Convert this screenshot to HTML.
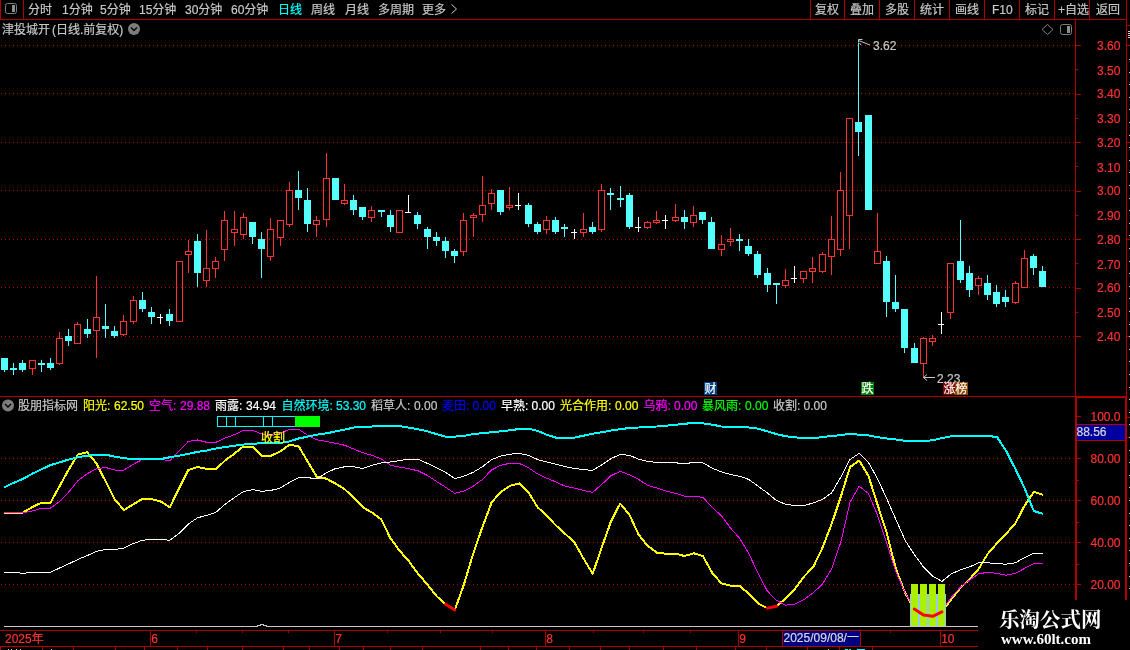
<!DOCTYPE html>
<html lang="zh-CN"><head><meta charset="utf-8"><title>津投城开 日线</title>
<style>html,body{margin:0;padding:0;background:#000;overflow:hidden}svg{display:block;will-change:transform}text{font-family:"Liberation Sans","Noto Sans CJK SC",sans-serif;white-space:pre}.serif{font-family:"Liberation Serif","Noto Serif CJK SC",serif;font-weight:bold}</style></head><body>
<svg width="1130" height="650" viewBox="0 0 1130 650">
<rect width="1130" height="650" fill="#000"/>
<g shape-rendering="crispEdges">
<line x1="1" y1="45.5" x2="1075" y2="45.5" stroke="#B00000" stroke-width="1" stroke-dasharray="1 3"/>
<line x1="1" y1="93.5" x2="1075" y2="93.5" stroke="#B00000" stroke-width="1" stroke-dasharray="1 3"/>
<line x1="1" y1="142.5" x2="1075" y2="142.5" stroke="#B00000" stroke-width="1" stroke-dasharray="1 3"/>
<line x1="1" y1="190.5" x2="1075" y2="190.5" stroke="#B00000" stroke-width="1" stroke-dasharray="1 3"/>
<line x1="1" y1="239.5" x2="1075" y2="239.5" stroke="#B00000" stroke-width="1" stroke-dasharray="1 3"/>
<line x1="1" y1="287.5" x2="1075" y2="287.5" stroke="#B00000" stroke-width="1" stroke-dasharray="1 3"/>
<line x1="1" y1="336.5" x2="1075" y2="336.5" stroke="#B00000" stroke-width="1" stroke-dasharray="1 3"/>
<line x1="1" y1="458.5" x2="1075" y2="458.5" stroke="#B00000" stroke-width="1" stroke-dasharray="1 3"/>
<line x1="1" y1="500.5" x2="1075" y2="500.5" stroke="#B00000" stroke-width="1" stroke-dasharray="1 3"/>
<line x1="1" y1="542.5" x2="1075" y2="542.5" stroke="#B00000" stroke-width="1" stroke-dasharray="1 3"/>
<line x1="1" y1="584.5" x2="1075" y2="584.5" stroke="#B00000" stroke-width="1" stroke-dasharray="1 3"/>
<rect x="0" y="0" width="1" height="20" fill="#B00000" />
<rect x="23" y="0" width="1" height="20" fill="#B00000" />
<rect x="0" y="19" width="1127" height="1" fill="#B00000" />
<rect x="810" y="0" width="1" height="19" fill="#B00000" />
<rect x="844" y="0" width="1" height="19" fill="#B00000" />
<rect x="879" y="0" width="1" height="19" fill="#B00000" />
<rect x="914" y="0" width="1" height="19" fill="#B00000" />
<rect x="949" y="0" width="1" height="19" fill="#B00000" />
<rect x="984" y="0" width="1" height="19" fill="#B00000" />
<rect x="1019" y="0" width="1" height="19" fill="#B00000" />
<rect x="1054" y="0" width="1" height="19" fill="#B00000" />
<rect x="1089" y="0" width="1" height="19" fill="#B00000" />
<rect x="1126" y="0" width="1" height="397" fill="#B00000" />
<rect x="1125" y="397" width="2" height="203" fill="#B00000" />
<rect x="1075" y="19" width="1" height="378" fill="#B00000" />
<rect x="1075" y="397" width="2" height="203" fill="#B00000" />
<rect x="0" y="396" width="1075" height="1" fill="#B00000" />
<rect x="1075" y="396" width="52" height="2" fill="#B00000" />
<rect x="0" y="630" width="978" height="1" fill="#B00000" />
<rect x="0" y="646" width="978" height="1" fill="#B00000" />
<rect x="1127" y="25" width="3" height="1" fill="#B00000" />
<rect x="1127" y="45" width="3" height="1" fill="#B00000" />
<rect x="1127" y="142" width="3" height="1" fill="#B00000" />
<rect x="1127" y="239" width="3" height="1" fill="#B00000" />
<rect x="1127" y="336" width="3" height="1" fill="#B00000" />
<rect x="1127" y="417" width="3" height="1" fill="#B00000" />
<rect x="1127" y="437" width="3" height="1" fill="#B00000" />
<rect x="1129" y="59" width="1" height="1" fill="#D0D0D0" />
<rect x="1129" y="72" width="1" height="1" fill="#D0D0D0" />
<rect x="1129" y="84" width="1" height="1" fill="#D0D0D0" />
<rect x="1129" y="97" width="1" height="1" fill="#D0D0D0" />
<rect x="1129" y="109" width="1" height="1" fill="#D0D0D0" />
<rect x="1129" y="122" width="1" height="1" fill="#D0D0D0" />
<rect x="1129" y="135" width="1" height="1" fill="#D0D0D0" />
<rect x="1129" y="147" width="1" height="1" fill="#D0D0D0" />
<rect x="1129" y="160" width="1" height="1" fill="#D0D0D0" />
<rect x="1129" y="172" width="1" height="1" fill="#D0D0D0" />
<rect x="1129" y="185" width="1" height="1" fill="#D0D0D0" />
<rect x="1129" y="198" width="1" height="1" fill="#D0D0D0" />
<rect x="1129" y="210" width="1" height="1" fill="#D0D0D0" />
<rect x="1129" y="223" width="1" height="1" fill="#D0D0D0" />
<rect x="1129" y="235" width="1" height="1" fill="#D0D0D0" />
<rect x="1129" y="248" width="1" height="1" fill="#D0D0D0" />
<rect x="1129" y="261" width="1" height="1" fill="#D0D0D0" />
<rect x="1129" y="273" width="1" height="1" fill="#D0D0D0" />
<rect x="1129" y="286" width="1" height="1" fill="#D0D0D0" />
<rect x="1129" y="298" width="1" height="1" fill="#D0D0D0" />
<rect x="1129" y="311" width="1" height="1" fill="#D0D0D0" />
<rect x="1129" y="324" width="1" height="1" fill="#D0D0D0" />
<rect x="1129" y="336" width="1" height="1" fill="#D0D0D0" />
<rect x="1129" y="349" width="1" height="1" fill="#D0D0D0" />
<rect x="1129" y="361" width="1" height="1" fill="#D0D0D0" />
<rect x="1129" y="374" width="1" height="1" fill="#D0D0D0" />
<rect x="1129" y="387" width="1" height="1" fill="#D0D0D0" />
<rect x="1129" y="399" width="1" height="1" fill="#D0D0D0" />
<rect x="1129" y="412" width="1" height="1" fill="#D0D0D0" />
<rect x="1129" y="424" width="1" height="1" fill="#D0D0D0" />
<rect x="1129" y="437" width="1" height="1" fill="#D0D0D0" />
<rect x="1129" y="450" width="1" height="1" fill="#D0D0D0" />
<rect x="1129" y="462" width="1" height="1" fill="#D0D0D0" />
<rect x="1129" y="475" width="1" height="1" fill="#D0D0D0" />
<rect x="1129" y="487" width="1" height="1" fill="#D0D0D0" />
<rect x="1129" y="500" width="1" height="1" fill="#D0D0D0" />
<rect x="1129" y="513" width="1" height="1" fill="#D0D0D0" />
<rect x="1129" y="525" width="1" height="1" fill="#D0D0D0" />
<rect x="1129" y="538" width="1" height="1" fill="#D0D0D0" />
<rect x="1129" y="550" width="1" height="1" fill="#D0D0D0" />
<rect x="1129" y="563" width="1" height="1" fill="#D0D0D0" />
<rect x="1129" y="576" width="1" height="1" fill="#D0D0D0" />
<rect x="1129" y="588" width="1" height="1" fill="#D0D0D0" />
<rect x="1128" y="31" width="2" height="1" fill="#D0D0D0" />
<rect x="1128" y="33" width="2" height="1" fill="#D0D0D0" />
<rect x="1128" y="35" width="2" height="1" fill="#D0D0D0" />
<rect x="1128" y="37" width="2" height="1" fill="#D0D0D0" />
<rect x="1076" y="45" width="5" height="1" fill="#B00000" />
<rect x="1076" y="69" width="2" height="1" fill="#B00000" />
<rect x="1076" y="94" width="5" height="1" fill="#B00000" />
<rect x="1076" y="118" width="2" height="1" fill="#B00000" />
<rect x="1076" y="142" width="5" height="1" fill="#B00000" />
<rect x="1076" y="166" width="2" height="1" fill="#B00000" />
<rect x="1076" y="191" width="5" height="1" fill="#B00000" />
<rect x="1076" y="215" width="2" height="1" fill="#B00000" />
<rect x="1076" y="239" width="5" height="1" fill="#B00000" />
<rect x="1076" y="263" width="2" height="1" fill="#B00000" />
<rect x="1076" y="288" width="5" height="1" fill="#B00000" />
<rect x="1076" y="312" width="2" height="1" fill="#B00000" />
<rect x="1076" y="336" width="5" height="1" fill="#B00000" />
<rect x="1077" y="416" width="4" height="1" fill="#B00000" />
<rect x="1077" y="438" width="2" height="1" fill="#B00000" />
<rect x="1077" y="458" width="4" height="1" fill="#B00000" />
<rect x="1077" y="480" width="2" height="1" fill="#B00000" />
<rect x="1077" y="500" width="4" height="1" fill="#B00000" />
<rect x="1077" y="522" width="2" height="1" fill="#B00000" />
<rect x="1077" y="542" width="4" height="1" fill="#B00000" />
<rect x="1077" y="564" width="2" height="1" fill="#B00000" />
<rect x="1077" y="584" width="4" height="1" fill="#B00000" />
<rect x="150" y="630" width="1" height="16" fill="#B00000" />
<rect x="334" y="630" width="1" height="16" fill="#B00000" />
<rect x="545" y="630" width="1" height="16" fill="#B00000" />
<rect x="738" y="630" width="1" height="16" fill="#B00000" />
<rect x="940" y="630" width="1" height="16" fill="#B00000" />
<rect x="196" y="630" width="1" height="3" fill="#B00000" />
<rect x="242" y="630" width="1" height="3" fill="#B00000" />
<rect x="288" y="630" width="1" height="3" fill="#B00000" />
<rect x="387" y="630" width="1" height="3" fill="#B00000" />
<rect x="440" y="630" width="1" height="3" fill="#B00000" />
<rect x="492" y="630" width="1" height="3" fill="#B00000" />
<rect x="593" y="630" width="1" height="3" fill="#B00000" />
<rect x="643" y="630" width="1" height="3" fill="#B00000" />
<rect x="690" y="630" width="1" height="3" fill="#B00000" />
<rect x="890" y="630" width="1" height="3" fill="#B00000" />
<rect x="0" y="646" width="1" height="4" fill="#B00000" />
<rect x="42" y="646" width="1" height="4" fill="#B00000" />
<rect x="73" y="646" width="1" height="4" fill="#B00000" />
<rect x="115" y="646" width="1" height="4" fill="#B00000" />
<rect x="144" y="646" width="1" height="4" fill="#B00000" />
<rect x="177" y="646" width="1" height="4" fill="#B00000" />
<rect x="207" y="646" width="1" height="4" fill="#B00000" />
<rect x="242" y="646" width="1" height="4" fill="#B00000" />
<rect x="283" y="646" width="1" height="4" fill="#B00000" />
<rect x="309" y="646" width="1" height="4" fill="#B00000" />
<rect x="339" y="646" width="1" height="4" fill="#B00000" />
<rect x="363" y="646" width="1" height="4" fill="#B00000" />
<rect x="390" y="646" width="1" height="4" fill="#B00000" />
<rect x="422" y="646" width="1" height="4" fill="#B00000" />
<rect x="480" y="646" width="1" height="4" fill="#B00000" />
<rect x="508" y="646" width="1" height="4" fill="#B00000" />
<rect x="536" y="646" width="1" height="4" fill="#B00000" />
<rect x="569" y="646" width="1" height="4" fill="#B00000" />
<rect x="600" y="646" width="1" height="4" fill="#B00000" />
<rect x="629" y="646" width="1" height="4" fill="#B00000" />
<rect x="663" y="646" width="1" height="4" fill="#B00000" />
<rect x="696" y="646" width="1" height="4" fill="#B00000" />
<rect x="735" y="646" width="1" height="4" fill="#B00000" />
<rect x="766" y="646" width="1" height="4" fill="#B00000" />
<rect x="807" y="646" width="1" height="4" fill="#B00000" />
<rect x="839" y="646" width="1" height="4" fill="#B00000" />
<rect x="872" y="646" width="1" height="4" fill="#B00000" />
<rect x="8" y="649" width="1" height="1" fill="#D0D0D0" />
<rect x="11" y="649" width="1" height="1" fill="#D0D0D0" />
<rect x="16" y="649" width="1" height="1" fill="#D0D0D0" />
<rect x="20" y="649" width="1" height="1" fill="#D0D0D0" />
<rect x="51" y="649" width="1" height="1" fill="#D0D0D0" />
<rect x="828" y="649" width="1" height="1" fill="#D0D0D0" />
<rect x="845" y="649" width="3" height="1" fill="#00FFFF" />
<rect x="849" y="649" width="2" height="1" fill="#00FFFF" />
<rect x="857" y="649" width="8" height="1" fill="#00FFFF" />
<rect x="4" y="358" width="1" height="14" fill="#54FFFF" />
<rect x="1" y="358" width="7" height="12" fill="#54FFFF" />
<rect x="13" y="363" width="1" height="12" fill="#54FFFF" />
<rect x="10" y="368" width="7" height="2" fill="#54FFFF" />
<rect x="22" y="360" width="1" height="12" fill="#54FFFF" />
<rect x="19" y="363" width="7" height="7" fill="#54FFFF" />
<rect x="32" y="369" width="1" height="6" fill="#FF3232" />
<rect x="29.5" y="360.5" width="6" height="8" fill="none" stroke="#FF3232" stroke-width="1"/>
<rect x="41" y="360" width="1" height="12" fill="#54FFFF" />
<rect x="38" y="363" width="7" height="2" fill="#54FFFF" />
<rect x="50" y="358" width="1" height="12" fill="#54FFFF" />
<rect x="47" y="363" width="7" height="5" fill="#54FFFF" />
<rect x="59" y="332" width="1" height="6" fill="#FF3232" />
<rect x="59" y="364" width="1" height="1" fill="#FF3232" />
<rect x="56.5" y="338.5" width="6" height="25" fill="none" stroke="#FF3232" stroke-width="1"/>
<rect x="68" y="329" width="1" height="17" fill="#54FFFF" />
<rect x="65" y="336" width="7" height="5" fill="#54FFFF" />
<rect x="77" y="322" width="1" height="2" fill="#FF3232" />
<rect x="74.5" y="324.5" width="6" height="19" fill="none" stroke="#FF3232" stroke-width="1"/>
<rect x="87" y="319" width="1" height="19" fill="#54FFFF" />
<rect x="84" y="329" width="7" height="5" fill="#54FFFF" />
<rect x="96" y="276" width="1" height="41" fill="#FF3232" />
<rect x="96" y="331" width="1" height="27" fill="#FF3232" />
<rect x="93.5" y="317.5" width="6" height="13" fill="none" stroke="#FF3232" stroke-width="1"/>
<rect x="105" y="304" width="1" height="34" fill="#54FFFF" />
<rect x="102" y="326" width="7" height="3" fill="#54FFFF" />
<rect x="114" y="326" width="1" height="12" fill="#54FFFF" />
<rect x="111" y="331" width="7" height="5" fill="#54FFFF" />
<rect x="123" y="315" width="1" height="6" fill="#FF3232" />
<rect x="123" y="335" width="1" height="1" fill="#FF3232" />
<rect x="120.5" y="321.5" width="6" height="13" fill="none" stroke="#FF3232" stroke-width="1"/>
<rect x="133" y="296" width="1" height="4" fill="#FF3232" />
<rect x="133" y="322" width="1" height="2" fill="#FF3232" />
<rect x="130.5" y="300.5" width="6" height="21" fill="none" stroke="#FF3232" stroke-width="1"/>
<rect x="142" y="292" width="1" height="20" fill="#54FFFF" />
<rect x="139" y="300" width="7" height="9" fill="#54FFFF" />
<rect x="151" y="307" width="1" height="17" fill="#54FFFF" />
<rect x="148" y="312" width="7" height="5" fill="#54FFFF" />
<rect x="160" y="314" width="1" height="10" fill="#FFFFFF" />
<rect x="157" y="317" width="6" height="1" fill="#FFFFFF" />
<rect x="169" y="309" width="1" height="17" fill="#54FFFF" />
<rect x="166" y="314" width="7" height="7" fill="#54FFFF" />
<rect x="176.5" y="261.5" width="6" height="60" fill="none" stroke="#FF3232" stroke-width="1"/>
<rect x="188" y="240" width="1" height="11" fill="#FF3232" />
<rect x="188" y="255" width="1" height="18" fill="#FF3232" />
<rect x="185.5" y="251.5" width="6" height="3" fill="none" stroke="#FF3232" stroke-width="1"/>
<rect x="197" y="234" width="1" height="53" fill="#54FFFF" />
<rect x="194" y="241" width="7" height="32" fill="#54FFFF" />
<rect x="206" y="230" width="1" height="38" fill="#FF3232" />
<rect x="206" y="281" width="1" height="6" fill="#FF3232" />
<rect x="203.5" y="268.5" width="6" height="12" fill="none" stroke="#FF3232" stroke-width="1"/>
<rect x="215" y="257" width="1" height="4" fill="#FF3232" />
<rect x="215" y="269" width="1" height="9" fill="#FF3232" />
<rect x="212.5" y="261.5" width="6" height="7" fill="none" stroke="#FF3232" stroke-width="1"/>
<rect x="224" y="211" width="1" height="9" fill="#FF3232" />
<rect x="224" y="250" width="1" height="11" fill="#FF3232" />
<rect x="221.5" y="220.5" width="6" height="29" fill="none" stroke="#FF3232" stroke-width="1"/>
<rect x="234" y="211" width="1" height="18" fill="#FF3232" />
<rect x="234" y="233" width="1" height="13" fill="#FF3232" />
<rect x="231.5" y="229.5" width="6" height="3" fill="none" stroke="#FF3232" stroke-width="1"/>
<rect x="243" y="213" width="1" height="4" fill="#FF3232" />
<rect x="243" y="235" width="1" height="4" fill="#FF3232" />
<rect x="240.5" y="217.5" width="6" height="17" fill="none" stroke="#FF3232" stroke-width="1"/>
<rect x="252" y="222" width="1" height="22" fill="#54FFFF" />
<rect x="249" y="222" width="7" height="15" fill="#54FFFF" />
<rect x="261" y="232" width="1" height="46" fill="#54FFFF" />
<rect x="258" y="239" width="7" height="10" fill="#54FFFF" />
<rect x="270" y="218" width="1" height="11" fill="#FF3232" />
<rect x="270" y="257" width="1" height="4" fill="#FF3232" />
<rect x="267.5" y="229.5" width="6" height="27" fill="none" stroke="#FF3232" stroke-width="1"/>
<rect x="280" y="238" width="1" height="8" fill="#FF3232" />
<rect x="277.5" y="220.5" width="6" height="17" fill="none" stroke="#FF3232" stroke-width="1"/>
<rect x="289" y="182" width="1" height="8" fill="#FF3232" />
<rect x="289" y="225" width="1" height="2" fill="#FF3232" />
<rect x="286.5" y="190.5" width="6" height="34" fill="none" stroke="#FF3232" stroke-width="1"/>
<rect x="298" y="171" width="1" height="39" fill="#54FFFF" />
<rect x="295" y="190" width="7" height="8" fill="#54FFFF" />
<rect x="307" y="188" width="1" height="44" fill="#54FFFF" />
<rect x="304" y="200" width="7" height="24" fill="#54FFFF" />
<rect x="316" y="216" width="1" height="4" fill="#FF3232" />
<rect x="316" y="225" width="1" height="12" fill="#FF3232" />
<rect x="313.5" y="220.5" width="6" height="4" fill="none" stroke="#FF3232" stroke-width="1"/>
<rect x="326" y="153" width="1" height="25" fill="#FF3232" />
<rect x="326" y="220" width="1" height="7" fill="#FF3232" />
<rect x="323.5" y="178.5" width="6" height="41" fill="none" stroke="#FF3232" stroke-width="1"/>
<rect x="335" y="178" width="1" height="22" fill="#54FFFF" />
<rect x="332" y="178" width="7" height="22" fill="#54FFFF" />
<rect x="344" y="184" width="1" height="16" fill="#FF3232" />
<rect x="344" y="204" width="1" height="1" fill="#FF3232" />
<rect x="341.5" y="200.5" width="6" height="3" fill="none" stroke="#FF3232" stroke-width="1"/>
<rect x="353" y="195" width="1" height="20" fill="#54FFFF" />
<rect x="350" y="200" width="7" height="10" fill="#54FFFF" />
<rect x="362" y="207" width="1" height="13" fill="#54FFFF" />
<rect x="359" y="207" width="7" height="10" fill="#54FFFF" />
<rect x="371" y="206" width="1" height="4" fill="#FF3232" />
<rect x="371" y="218" width="1" height="4" fill="#FF3232" />
<rect x="368.5" y="210.5" width="6" height="7" fill="none" stroke="#FF3232" stroke-width="1"/>
<rect x="381" y="210" width="1" height="7" fill="#54FFFF" />
<rect x="378" y="210" width="7" height="2" fill="#54FFFF" />
<rect x="390" y="210" width="1" height="22" fill="#54FFFF" />
<rect x="387" y="215" width="7" height="12" fill="#54FFFF" />
<rect x="396.5" y="210.5" width="6" height="22" fill="none" stroke="#FF3232" stroke-width="1"/>
<rect x="408" y="195" width="1" height="18" fill="#FFFFFF" />
<rect x="405" y="212" width="6" height="1" fill="#FFFFFF" />
<rect x="417" y="212" width="1" height="17" fill="#54FFFF" />
<rect x="414" y="215" width="7" height="9" fill="#54FFFF" />
<rect x="427" y="227" width="1" height="22" fill="#54FFFF" />
<rect x="424" y="229" width="7" height="8" fill="#54FFFF" />
<rect x="436" y="232" width="1" height="14" fill="#54FFFF" />
<rect x="433" y="237" width="7" height="4" fill="#54FFFF" />
<rect x="445" y="237" width="1" height="21" fill="#54FFFF" />
<rect x="442" y="241" width="7" height="10" fill="#54FFFF" />
<rect x="454" y="249" width="1" height="14" fill="#54FFFF" />
<rect x="451" y="251" width="7" height="5" fill="#54FFFF" />
<rect x="463" y="213" width="1" height="7" fill="#FF3232" />
<rect x="463" y="252" width="1" height="4" fill="#FF3232" />
<rect x="460.5" y="220.5" width="6" height="31" fill="none" stroke="#FF3232" stroke-width="1"/>
<rect x="473" y="213" width="1" height="2" fill="#FF3232" />
<rect x="473" y="218" width="1" height="19" fill="#FF3232" />
<rect x="470.5" y="215.5" width="6" height="2" fill="none" stroke="#FF3232" stroke-width="1"/>
<rect x="482" y="176" width="1" height="29" fill="#FF3232" />
<rect x="482" y="215" width="1" height="7" fill="#FF3232" />
<rect x="479.5" y="205.5" width="6" height="9" fill="none" stroke="#FF3232" stroke-width="1"/>
<rect x="491" y="189" width="1" height="4" fill="#FF3232" />
<rect x="491" y="204" width="1" height="6" fill="#FF3232" />
<rect x="488.5" y="193.5" width="6" height="10" fill="none" stroke="#FF3232" stroke-width="1"/>
<rect x="500" y="190" width="1" height="25" fill="#54FFFF" />
<rect x="497" y="190" width="7" height="22" fill="#54FFFF" />
<rect x="509" y="187" width="1" height="18" fill="#FF3232" />
<rect x="509" y="208" width="1" height="2" fill="#FF3232" />
<rect x="506.5" y="205.5" width="6" height="2" fill="none" stroke="#FF3232" stroke-width="1"/>
<rect x="518" y="193" width="1" height="17" fill="#FFFFFF" />
<rect x="515" y="205" width="6" height="1" fill="#FFFFFF" />
<rect x="528" y="203" width="1" height="24" fill="#54FFFF" />
<rect x="525" y="205" width="7" height="19" fill="#54FFFF" />
<rect x="537" y="222" width="1" height="12" fill="#54FFFF" />
<rect x="534" y="224" width="7" height="8" fill="#54FFFF" />
<rect x="546" y="216" width="1" height="4" fill="#FF3232" />
<rect x="546" y="230" width="1" height="4" fill="#FF3232" />
<rect x="543.5" y="220.5" width="6" height="9" fill="none" stroke="#FF3232" stroke-width="1"/>
<rect x="555" y="217" width="1" height="17" fill="#54FFFF" />
<rect x="552" y="220" width="7" height="12" fill="#54FFFF" />
<rect x="564" y="224" width="1" height="13" fill="#54FFFF" />
<rect x="561" y="227" width="7" height="2" fill="#54FFFF" />
<rect x="574" y="229" width="1" height="10" fill="#FFFFFF" />
<rect x="571" y="232" width="6" height="1" fill="#FFFFFF" />
<rect x="583" y="213" width="1" height="16" fill="#FF3232" />
<rect x="583" y="233" width="1" height="4" fill="#FF3232" />
<rect x="580.5" y="229.5" width="6" height="3" fill="none" stroke="#FF3232" stroke-width="1"/>
<rect x="592" y="222" width="1" height="12" fill="#54FFFF" />
<rect x="589" y="227" width="7" height="5" fill="#54FFFF" />
<rect x="601" y="184" width="1" height="6" fill="#FF3232" />
<rect x="601" y="230" width="1" height="2" fill="#FF3232" />
<rect x="598.5" y="190.5" width="6" height="39" fill="none" stroke="#FF3232" stroke-width="1"/>
<rect x="610" y="188" width="1" height="22" fill="#54FFFF" />
<rect x="607" y="193" width="7" height="2" fill="#54FFFF" />
<rect x="620" y="186" width="1" height="21" fill="#54FFFF" />
<rect x="617" y="198" width="7" height="2" fill="#54FFFF" />
<rect x="629" y="193" width="1" height="36" fill="#54FFFF" />
<rect x="626" y="195" width="7" height="32" fill="#54FFFF" />
<rect x="638" y="217" width="1" height="15" fill="#FFFFFF" />
<rect x="635" y="227" width="6" height="1" fill="#FFFFFF" />
<rect x="647" y="221" width="1" height="1" fill="#FF3232" />
<rect x="647" y="228" width="1" height="1" fill="#FF3232" />
<rect x="644.5" y="222.5" width="6" height="5" fill="none" stroke="#FF3232" stroke-width="1"/>
<rect x="656" y="211" width="1" height="9" fill="#FF3232" />
<rect x="656" y="223" width="1" height="1" fill="#FF3232" />
<rect x="653.5" y="220.5" width="6" height="2" fill="none" stroke="#FF3232" stroke-width="1"/>
<rect x="665" y="215" width="1" height="14" fill="#FFFFFF" />
<rect x="662" y="220" width="6" height="1" fill="#FFFFFF" />
<rect x="675" y="204" width="1" height="13" fill="#FF3232" />
<rect x="675" y="221" width="1" height="1" fill="#FF3232" />
<rect x="672.5" y="217.5" width="6" height="3" fill="none" stroke="#FF3232" stroke-width="1"/>
<rect x="684" y="210" width="1" height="19" fill="#54FFFF" />
<rect x="681" y="217" width="7" height="5" fill="#54FFFF" />
<rect x="693" y="206" width="1" height="9" fill="#FF3232" />
<rect x="693" y="223" width="1" height="4" fill="#FF3232" />
<rect x="690.5" y="215.5" width="6" height="7" fill="none" stroke="#FF3232" stroke-width="1"/>
<rect x="702" y="212" width="1" height="12" fill="#54FFFF" />
<rect x="699" y="212" width="7" height="8" fill="#54FFFF" />
<rect x="711" y="217" width="1" height="32" fill="#54FFFF" />
<rect x="708" y="222" width="7" height="27" fill="#54FFFF" />
<rect x="721" y="235" width="1" height="9" fill="#FF3232" />
<rect x="721" y="250" width="1" height="6" fill="#FF3232" />
<rect x="718.5" y="244.5" width="6" height="5" fill="none" stroke="#FF3232" stroke-width="1"/>
<rect x="730" y="228" width="1" height="11" fill="#FF3232" />
<rect x="730" y="242" width="1" height="4" fill="#FF3232" />
<rect x="727.5" y="239.5" width="6" height="2" fill="none" stroke="#FF3232" stroke-width="1"/>
<rect x="739" y="234" width="1" height="17" fill="#54FFFF" />
<rect x="736" y="239" width="7" height="2" fill="#54FFFF" />
<rect x="748" y="239" width="1" height="17" fill="#54FFFF" />
<rect x="745" y="246" width="7" height="8" fill="#54FFFF" />
<rect x="757" y="251" width="1" height="27" fill="#54FFFF" />
<rect x="754" y="254" width="7" height="21" fill="#54FFFF" />
<rect x="767" y="268" width="1" height="24" fill="#54FFFF" />
<rect x="764" y="273" width="7" height="12" fill="#54FFFF" />
<rect x="776" y="283" width="1" height="21" fill="#54FFFF" />
<rect x="773" y="283" width="7" height="2" fill="#54FFFF" />
<rect x="785" y="269" width="1" height="11" fill="#FF3232" />
<rect x="785" y="286" width="1" height="2" fill="#FF3232" />
<rect x="782.5" y="280.5" width="6" height="5" fill="none" stroke="#FF3232" stroke-width="1"/>
<rect x="794" y="266" width="1" height="17" fill="#FFFFFF" />
<rect x="791" y="278" width="6" height="1" fill="#FFFFFF" />
<rect x="803" y="279" width="1" height="4" fill="#FF3232" />
<rect x="800.5" y="271.5" width="6" height="7" fill="none" stroke="#FF3232" stroke-width="1"/>
<rect x="812" y="257" width="1" height="11" fill="#FF3232" />
<rect x="812" y="272" width="1" height="11" fill="#FF3232" />
<rect x="809.5" y="268.5" width="6" height="3" fill="none" stroke="#FF3232" stroke-width="1"/>
<rect x="822" y="252" width="1" height="2" fill="#FF3232" />
<rect x="822" y="272" width="1" height="1" fill="#FF3232" />
<rect x="819.5" y="254.5" width="6" height="17" fill="none" stroke="#FF3232" stroke-width="1"/>
<rect x="831" y="216" width="1" height="23" fill="#FF3232" />
<rect x="831" y="257" width="1" height="18" fill="#FF3232" />
<rect x="828.5" y="239.5" width="6" height="17" fill="none" stroke="#FF3232" stroke-width="1"/>
<rect x="840" y="172" width="1" height="18" fill="#FF3232" />
<rect x="840" y="250" width="1" height="6" fill="#FF3232" />
<rect x="837.5" y="190.5" width="6" height="59" fill="none" stroke="#FF3232" stroke-width="1"/>
<rect x="849" y="216" width="1" height="33" fill="#FF3232" />
<rect x="846.5" y="118.5" width="6" height="97" fill="none" stroke="#FF3232" stroke-width="1"/>
<rect x="858" y="43" width="1" height="113" fill="#54FFFF" />
<rect x="855" y="122" width="7" height="10" fill="#54FFFF" />
<rect x="868" y="115" width="1" height="95" fill="#54FFFF" />
<rect x="865" y="115" width="7" height="95" fill="#54FFFF" />
<rect x="877" y="213" width="1" height="38" fill="#FF3232" />
<rect x="874.5" y="251.5" width="6" height="12" fill="none" stroke="#FF3232" stroke-width="1"/>
<rect x="886" y="256" width="1" height="61" fill="#54FFFF" />
<rect x="883" y="261" width="7" height="41" fill="#54FFFF" />
<rect x="895" y="275" width="1" height="37" fill="#54FFFF" />
<rect x="892" y="302" width="7" height="7" fill="#54FFFF" />
<rect x="904" y="309" width="1" height="44" fill="#54FFFF" />
<rect x="901" y="309" width="7" height="39" fill="#54FFFF" />
<rect x="914" y="343" width="1" height="20" fill="#54FFFF" />
<rect x="911" y="348" width="7" height="15" fill="#54FFFF" />
<rect x="923" y="337" width="1" height="1" fill="#FF3232" />
<rect x="923" y="364" width="1" height="13" fill="#FF3232" />
<rect x="920.5" y="338.5" width="6" height="25" fill="none" stroke="#FF3232" stroke-width="1"/>
<rect x="932" y="335" width="1" height="3" fill="#FF3232" />
<rect x="932" y="342" width="1" height="4" fill="#FF3232" />
<rect x="929.5" y="338.5" width="6" height="3" fill="none" stroke="#FF3232" stroke-width="1"/>
<rect x="941" y="312" width="1" height="22" fill="#FFFFFF" />
<rect x="938" y="324" width="6" height="1" fill="#FFFFFF" />
<rect x="950" y="313" width="1" height="6" fill="#FF3232" />
<rect x="947.5" y="263.5" width="6" height="49" fill="none" stroke="#FF3232" stroke-width="1"/>
<rect x="960" y="220" width="1" height="63" fill="#54FFFF" />
<rect x="957" y="261" width="7" height="19" fill="#54FFFF" />
<rect x="969" y="266" width="1" height="31" fill="#54FFFF" />
<rect x="966" y="273" width="7" height="17" fill="#54FFFF" />
<rect x="978" y="276" width="1" height="2" fill="#FF3232" />
<rect x="978" y="286" width="1" height="9" fill="#FF3232" />
<rect x="975.5" y="278.5" width="6" height="7" fill="none" stroke="#FF3232" stroke-width="1"/>
<rect x="987" y="275" width="1" height="25" fill="#54FFFF" />
<rect x="984" y="283" width="7" height="12" fill="#54FFFF" />
<rect x="996" y="285" width="1" height="22" fill="#54FFFF" />
<rect x="993" y="292" width="7" height="12" fill="#54FFFF" />
<rect x="1005" y="290" width="1" height="17" fill="#54FFFF" />
<rect x="1002" y="297" width="7" height="5" fill="#54FFFF" />
<rect x="1015" y="281" width="1" height="2" fill="#FF3232" />
<rect x="1015" y="303" width="1" height="1" fill="#FF3232" />
<rect x="1012.5" y="283.5" width="6" height="19" fill="none" stroke="#FF3232" stroke-width="1"/>
<rect x="1024" y="250" width="1" height="8" fill="#FF3232" />
<rect x="1021.5" y="258.5" width="6" height="29" fill="none" stroke="#FF3232" stroke-width="1"/>
<rect x="1033" y="254" width="1" height="21" fill="#54FFFF" />
<rect x="1030" y="256" width="7" height="12" fill="#54FFFF" />
<rect x="1042" y="266" width="1" height="21" fill="#54FFFF" />
<rect x="1039" y="271" width="7" height="16" fill="#54FFFF" />
<rect x="217.5" y="416.5" width="78" height="10" fill="none" stroke="#00FFFF" stroke-width="1"/>
<rect x="226" y="416" width="1" height="11" fill="#00FFFF" />
<rect x="235" y="416" width="1" height="11" fill="#00FFFF" />
<rect x="263" y="416" width="1" height="11" fill="#00FFFF" />
<rect x="272" y="416" width="1" height="11" fill="#00FFFF" />
<rect x="295" y="416" width="25" height="11" fill="#00FF00" />
<rect x="910" y="594" width="36" height="32" fill="#96C8F0" />
<rect x="911" y="584" width="7" height="42" fill="#AAF000" />
<rect x="920" y="584" width="7" height="42" fill="#AAF000" />
<rect x="929" y="584" width="7" height="42" fill="#AAF000" />
<rect x="938" y="584" width="7" height="42" fill="#AAF000" />
</g>
<polyline points="4.0,512.5 4.5,512.5 13.7,512.5 22.9,512.5 32.1,507.2 41.3,502.8 50.4,502.8 59.6,486.2 68.8,469.4 78.0,454.4 87.2,452.3 96.4,463.3 105.6,481.4 114.8,499.6 124.0,510.1 133.2,504.3 142.3,499.0 151.5,499.0 160.7,501.5 169.9,507.2 179.1,488.1 188.3,470.0 197.5,467.1 206.7,468.8 215.9,469.2 225.1,460.5 234.2,453.8 243.4,446.5 252.6,446.5 261.8,455.7 271.0,455.7 280.2,451.5 289.4,444.8 298.6,446.2 307.8,461.8 317.0,477.1 326.1,478.6 335.3,483.4 344.5,489.1 353.7,497.7 362.9,507.3 372.1,512.6 381.3,519.5 390.5,538.4 399.7,550.8 408.9,561.3 418.0,573.7 427.2,584.2 436.4,596.0 445.6,604.2 454.8,610.0 464.0,584.2 473.2,553.7 482.4,527.0 491.6,502.4 500.8,491.9 509.9,485.8 519.1,483.4 528.3,491.9 537.5,507.2 546.7,515.5 555.9,525.5 565.1,533.7 574.3,542.2 583.5,558.5 592.7,573.7 601.9,547.0 611.0,521.3 620.2,503.5 629.4,514.7 638.6,534.6 647.8,546.0 657.0,552.7 666.2,553.7 675.4,553.7 684.6,556.0 693.8,553.3 702.9,556.0 712.1,572.8 721.3,583.3 730.5,585.7 739.7,586.1 748.9,593.8 758.1,603.5 767.3,608.1 776.5,606.2 785.6,598.5 794.8,589.0 804.0,576.6 813.2,567.0 822.4,548.0 831.6,524.0 840.8,496.7 850.0,467.1 859.2,460.5 868.4,475.7 877.5,504.5 886.7,532.7 895.9,569.0 905.1,592.8 914.3,609.0 923.5,615.1 932.7,616.3 941.9,611.9 951.1,599.5 960.3,588.0 969.4,579.4 978.6,569.0 987.8,553.7 997.0,543.2 1006.2,533.7 1015.4,523.3 1024.6,505.6 1033.8,491.9 1043.0,494.8" fill="none" stroke="#FFFF00" stroke-width="2" stroke-linejoin="round" shape-rendering="crispEdges"/>
<polyline points="4.0,512.9 4.5,512.9 13.7,512.9 22.9,512.9 32.1,511.0 41.3,508.5 50.4,508.2 59.6,501.5 68.8,491.9 78.0,480.5 87.2,473.8 96.4,468.7 105.6,467.5 114.8,470.0 124.0,470.0 133.2,464.3 142.3,459.5 151.5,458.5 160.7,459.5 169.9,460.5 179.1,450.9 188.3,441.4 197.5,440.0 206.7,442.3 215.9,442.3 225.1,438.1 234.2,434.7 243.4,430.4 252.6,430.4 261.8,434.0 271.0,436.0 280.2,433.0 289.4,429.5 298.6,429.3 307.8,435.4 317.0,439.9 326.1,441.4 335.3,443.3 344.5,445.2 353.7,449.0 362.9,452.8 372.1,455.3 381.3,459.1 390.5,465.2 399.7,467.1 408.9,468.7 418.0,470.8 427.2,475.3 436.4,481.4 445.6,487.2 454.8,493.3 464.0,491.0 473.2,486.2 482.4,479.5 491.6,470.0 500.8,465.2 509.9,463.3 519.1,463.3 528.3,467.7 537.5,473.8 546.7,478.2 555.9,482.0 565.1,486.2 574.3,488.1 583.5,490.4 592.7,492.3 601.9,484.3 611.0,475.7 620.2,471.3 629.4,474.8 638.6,479.5 647.8,485.3 657.0,488.1 666.2,491.0 675.4,493.3 684.6,496.1 693.8,496.3 702.9,497.3 712.1,507.2 721.3,515.7 730.5,528.0 739.7,538.4 748.9,553.7 758.1,573.5 767.3,590.9 776.5,600.4 785.6,605.2 794.8,604.2 804.0,599.5 813.2,592.8 822.4,584.2 831.6,569.0 840.8,542.2 850.0,502.4 859.2,486.2 868.4,493.5 877.5,515.0 886.7,543.2 895.9,571.8 905.1,592.8 914.3,608.0 923.5,614.0 932.7,615.0 941.9,610.0 951.1,597.6 960.3,587.1 969.4,580.4 978.6,573.7 987.8,572.4 997.0,573.3 1006.2,575.2 1015.4,573.3 1024.6,568.4 1033.8,563.6 1043.0,563.2" fill="none" stroke="#FF00FF" stroke-width="1" stroke-linejoin="round" shape-rendering="crispEdges"/>
<polyline points="4.0,572.4 4.5,572.4 13.7,572.4 22.9,573.3 32.1,572.4 41.3,572.4 50.4,572.4 59.6,568.0 68.8,563.8 78.0,559.4 87.2,555.6 96.4,551.4 105.6,549.5 114.8,549.5 124.0,548.0 133.2,543.6 142.3,540.3 151.5,539.4 160.7,539.4 169.9,540.3 179.1,533.3 188.3,524.1 197.5,517.8 206.7,515.4 215.9,512.3 225.1,504.3 234.2,497.7 243.4,491.6 252.6,489.6 261.8,491.4 271.0,490.4 280.2,488.1 289.4,482.4 298.6,477.6 307.8,477.6 317.0,479.0 326.1,472.9 335.3,468.7 344.5,466.8 353.7,466.8 362.9,468.5 372.1,465.2 381.3,462.9 390.5,462.0 399.7,460.5 408.9,459.1 418.0,459.1 427.2,463.3 436.4,467.7 445.6,472.3 454.8,478.6 464.0,476.1 473.2,472.3 482.4,466.8 491.6,459.5 500.8,456.1 509.9,454.2 519.1,453.4 528.3,455.3 537.5,459.5 546.7,462.0 555.9,464.3 565.1,466.6 574.3,468.5 583.5,469.6 592.7,470.4 601.9,464.7 611.0,458.6 620.2,454.4 629.4,455.3 638.6,459.1 647.8,461.4 657.0,462.4 666.2,462.4 675.4,462.8 684.6,463.7 693.8,462.4 702.9,462.8 712.1,468.1 721.3,471.9 730.5,474.4 739.7,476.3 748.9,479.5 758.1,486.2 767.3,492.9 776.5,500.5 785.6,504.3 794.8,505.5 804.0,505.5 813.2,503.0 822.4,499.4 831.6,492.9 840.8,477.1 850.0,459.5 859.2,453.4 868.4,462.4 877.5,478.6 886.7,498.6 895.9,519.5 905.1,540.3 914.3,554.6 923.5,567.0 932.7,576.2 941.9,581.4 951.1,574.0 960.3,569.9 969.4,567.0 978.6,562.8 987.8,562.8 997.0,563.6 1006.2,564.2 1015.4,562.8 1024.6,557.5 1033.8,553.3 1043.0,553.3" fill="none" stroke="#FFFFFF" stroke-width="1" stroke-linejoin="round" shape-rendering="crispEdges"/>
<polyline points="4.0,487.2 4.5,487.2 13.7,482.8 22.9,479.0 32.1,473.8 41.3,469.4 50.4,465.2 59.6,462.4 68.8,459.5 78.0,457.2 87.2,455.7 96.4,454.7 105.6,454.7 114.8,456.6 124.0,458.2 133.2,459.1 142.3,459.1 151.5,459.1 160.7,459.1 169.9,457.2 179.1,455.7 188.3,453.8 197.5,451.9 206.7,450.5 215.9,448.5 225.1,447.1 234.2,445.8 243.4,444.6 252.6,443.7 261.8,443.3 271.0,443.3 280.2,442.9 289.4,441.4 298.6,438.5 307.8,436.6 317.0,434.7 326.1,433.4 335.3,431.5 344.5,429.6 353.7,427.6 362.9,426.5 372.1,426.5 381.3,425.7 390.5,425.7 399.7,426.1 408.9,427.6 418.0,429.2 427.2,431.3 436.4,434.1 445.6,436.6 454.8,436.6 464.0,436.0 473.2,434.1 482.4,433.2 491.6,432.2 500.8,431.3 509.9,430.3 519.1,429.0 528.3,428.6 537.5,430.9 546.7,434.7 555.9,437.6 565.1,437.6 574.3,437.6 583.5,435.7 592.7,433.8 601.9,432.2 611.0,430.5 620.2,429.2 629.4,428.0 638.6,427.5 647.8,426.7 657.0,426.5 666.2,425.7 675.4,424.8 684.6,423.8 693.8,422.9 702.9,423.3 712.1,424.6 721.3,426.5 730.5,426.7 739.7,426.7 748.9,427.5 758.1,428.6 767.3,431.3 776.5,434.1 785.6,436.2 794.8,437.2 804.0,438.5 813.2,438.3 822.4,437.1 831.6,436.0 840.8,435.1 850.0,433.8 859.2,434.7 868.4,435.3 877.5,437.2 886.7,438.5 895.9,439.5 905.1,440.8 914.3,440.8 923.5,440.8 932.7,440.4 941.9,438.1 951.1,436.2 960.3,436.2 969.4,436.2 978.6,436.2 987.8,436.0 997.0,437.0 1006.2,450.9 1015.4,469.0 1024.6,488.1 1033.8,511.0 1043.0,513.9" fill="none" stroke="#00FFFF" stroke-width="2" stroke-linejoin="round" shape-rendering="crispEdges"/>
<polyline points="445.6,604.2 454.8,610.0" fill="none" stroke="#FF0000" stroke-width="3" stroke-linecap="round" stroke-linejoin="round"/>
<polyline points="767.3,608.1 776.5,606.2" fill="none" stroke="#FF0000" stroke-width="3" stroke-linecap="round" stroke-linejoin="round"/>
<g shape-rendering="crispEdges">
<rect x="910" y="594" width="36" height="32" fill="#96C8F0" />
<rect x="911" y="584" width="7" height="42" fill="#AAF000" />
<rect x="920" y="584" width="7" height="42" fill="#AAF000" />
<rect x="929" y="584" width="7" height="42" fill="#AAF000" />
<rect x="938" y="584" width="7" height="42" fill="#AAF000" />
</g>
<polyline points="914.3,609.0 923.5,615.1 932.7,616.3 941.9,611.9" fill="none" stroke="#FF0000" stroke-width="3" stroke-linecap="round" stroke-linejoin="round"/>
<polyline points="4,626.5 256,626.5 259,625.5 262,624.5 265,625.5 268,626.5 978,626.5" fill="none" stroke="#C8C8C8" stroke-width="1" shape-rendering="crispEdges"/>
<rect x="978" y="600" width="152" height="50" fill="#000" />
<text x="28" y="14" fill="#C8C8C8" stroke="#C8C8C8" stroke-width="0.2" font-size="12" >分时</text>
<text x="62" y="14" fill="#C8C8C8" stroke="#C8C8C8" stroke-width="0.2" font-size="12" >1分钟</text>
<text x="100" y="14" fill="#C8C8C8" stroke="#C8C8C8" stroke-width="0.2" font-size="12" >5分钟</text>
<text x="139" y="14" fill="#C8C8C8" stroke="#C8C8C8" stroke-width="0.2" font-size="12" >15分钟</text>
<text x="185" y="14" fill="#C8C8C8" stroke="#C8C8C8" stroke-width="0.2" font-size="12" >30分钟</text>
<text x="231" y="14" fill="#C8C8C8" stroke="#C8C8C8" stroke-width="0.2" font-size="12" >60分钟</text>
<text x="278" y="14" fill="#00FFFF" stroke="#00FFFF" stroke-width="0.2" font-size="12" >日线</text>
<text x="311" y="14" fill="#C8C8C8" stroke="#C8C8C8" stroke-width="0.2" font-size="12" >周线</text>
<text x="345" y="14" fill="#C8C8C8" stroke="#C8C8C8" stroke-width="0.2" font-size="12" >月线</text>
<text x="378" y="14" fill="#C8C8C8" stroke="#C8C8C8" stroke-width="0.2" font-size="12" >多周期</text>
<text x="422" y="14" fill="#C8C8C8" stroke="#C8C8C8" stroke-width="0.2" font-size="12" >更多</text>
<polyline points="451.5,4.5 456.5,9 451.5,13.5" fill="none" stroke="#C8C8C8" stroke-width="1"/>
<text x="815" y="14" fill="#C8C8C8" stroke="#C8C8C8" stroke-width="0.2" font-size="12" >复权</text>
<text x="850" y="14" fill="#C8C8C8" stroke="#C8C8C8" stroke-width="0.2" font-size="12" >叠加</text>
<text x="885" y="14" fill="#C8C8C8" stroke="#C8C8C8" stroke-width="0.2" font-size="12" >多股</text>
<text x="920" y="14" fill="#C8C8C8" stroke="#C8C8C8" stroke-width="0.2" font-size="12" >统计</text>
<text x="955" y="14" fill="#C8C8C8" stroke="#C8C8C8" stroke-width="0.2" font-size="12" >画线</text>
<text x="992" y="14" fill="#C8C8C8" stroke="#C8C8C8" stroke-width="0.2" font-size="12" >F10</text>
<text x="1025" y="14" fill="#C8C8C8" stroke="#C8C8C8" stroke-width="0.2" font-size="12" >标记</text>
<text x="1058" y="14" fill="#C8C8C8" stroke="#C8C8C8" stroke-width="0.2" font-size="12" >+自选</text>
<text x="1096" y="14" fill="#C8C8C8" stroke="#C8C8C8" stroke-width="0.2" font-size="12" >返回</text>
<rect x="5.5" y="3.5" width="11" height="10" rx="2" fill="none" stroke="#808080"/>
<rect x="12" y="5" width="3" height="7" fill="#909090" />
<rect x="1060.5" y="24.5" width="11" height="10" rx="2" fill="none" stroke="#808080"/>
<rect x="1067" y="26" width="3" height="7" fill="#909090" />
<polygon points="1047.5,24.5 1053,29.5 1047.5,34.5 1042,29.5" fill="none" stroke="#808080"/>
<text x="2" y="34" fill="#C8C8C8" stroke="#C8C8C8" stroke-width="0.2" font-size="12" >津投城开</text>
<text x="52" y="34" fill="#C8C8C8" stroke="#C8C8C8" stroke-width="0.2" font-size="12" >(日线.前复权)</text>
<circle cx="134" cy="29" r="6" fill="#7D7D7D"/><polyline points="131,27.5 134,30.5 137,27.5" fill="none" stroke="#000" stroke-width="1.3"/>
<text x="1097" y="50" fill="#FF3232" stroke="#FF3232" stroke-width="0.2" font-size="12" >3.60</text>
<text x="1097" y="75" fill="#FF3232" stroke="#FF3232" stroke-width="0.2" font-size="12" >3.50</text>
<text x="1097" y="98" fill="#FF3232" stroke="#FF3232" stroke-width="0.2" font-size="12" >3.40</text>
<text x="1097" y="123" fill="#FF3232" stroke="#FF3232" stroke-width="0.2" font-size="12" >3.30</text>
<text x="1097" y="147" fill="#FF3232" stroke="#FF3232" stroke-width="0.2" font-size="12" >3.20</text>
<text x="1097" y="172" fill="#FF3232" stroke="#FF3232" stroke-width="0.2" font-size="12" >3.10</text>
<text x="1097" y="195" fill="#FF3232" stroke="#FF3232" stroke-width="0.2" font-size="12" >3.00</text>
<text x="1097" y="220" fill="#FF3232" stroke="#FF3232" stroke-width="0.2" font-size="12" >2.90</text>
<text x="1097" y="244" fill="#FF3232" stroke="#FF3232" stroke-width="0.2" font-size="12" >2.80</text>
<text x="1097" y="269" fill="#FF3232" stroke="#FF3232" stroke-width="0.2" font-size="12" >2.70</text>
<text x="1097" y="292" fill="#FF3232" stroke="#FF3232" stroke-width="0.2" font-size="12" >2.60</text>
<text x="1097" y="317" fill="#FF3232" stroke="#FF3232" stroke-width="0.2" font-size="12" >2.50</text>
<text x="1097" y="341" fill="#FF3232" stroke="#FF3232" stroke-width="0.2" font-size="12" >2.40</text>
<text x="1090.5" y="421" fill="#FF3232" stroke="#FF3232" stroke-width="0.2" font-size="12" >100.0</text>
<text x="1090.5" y="463" fill="#FF3232" stroke="#FF3232" stroke-width="0.2" font-size="12" >80.00</text>
<text x="1090.5" y="505" fill="#FF3232" stroke="#FF3232" stroke-width="0.2" font-size="12" >60.00</text>
<text x="1090.5" y="547" fill="#FF3232" stroke="#FF3232" stroke-width="0.2" font-size="12" >40.00</text>
<text x="1090.5" y="589" fill="#FF3232" stroke="#FF3232" stroke-width="0.2" font-size="12" >20.00</text>
<rect x="1077" y="425" width="48" height="15" fill="#0000A0" />
<g shape-rendering="crispEdges"><rect x="1077" y="424" width="48" height="1" fill="#B00000"/><rect x="1077" y="440" width="48" height="1" fill="#B00000"/></g>
<text x="1076.5" y="436" fill="#D8D8D8" stroke="#D8D8D8" stroke-width="0.2" font-size="12" >88.56</text>
<g fill="none" stroke="#C8C8C8" stroke-width="1"><path d="M858.5 40.5 L870 45 M858.5 39.5 H862.5 M858.5 39.5 V42.5 M859.5 43 L861 45"/><path d="M923.5 377.5 H935 M923.5 377.5 L927 374.5 M923.5 377.5 L927 380.5"/></g>
<text x="873" y="50" fill="#C8C8C8" stroke="#C8C8C8" stroke-width="0.2" font-size="12" >3.62</text>
<text x="937" y="383" fill="#C8C8C8" stroke="#C8C8C8" stroke-width="0.2" font-size="12" >2.23</text>
<rect x="704" y="382" width="13" height="13" fill="#004080" />
<text x="704.5" y="393" fill="#FFFFFF" stroke="#FFFFFF" stroke-width="0.2" font-size="12" >财</text>
<rect x="861" y="382" width="13" height="13" fill="#008000" />
<text x="861.5" y="393" fill="#FFFFFF" stroke="#FFFFFF" stroke-width="0.2" font-size="12" >跌</text>
<rect x="943" y="382" width="13" height="13" fill="#800000" />
<text x="943.5" y="393" fill="#FFFFFF" stroke="#FFFFFF" stroke-width="0.2" font-size="12" >涨</text>
<rect x="955" y="382" width="13" height="13" fill="#904800" />
<text x="955.5" y="393" fill="#FFFFFF" stroke="#FFFFFF" stroke-width="0.2" font-size="12" >榜</text>
<circle cx="8" cy="405.5" r="6" fill="#7D7D7D"/><polyline points="5,404 8,407 11,404" fill="none" stroke="#000" stroke-width="1.3"/>
<text x="18" y="410" fill="#C8C8C8" stroke="#C8C8C8" stroke-width="0.2" font-size="12" >股朋指标网</text>
<text x="83" y="410" fill="#FFFF00" stroke="#FFFF00" stroke-width="0.2" font-size="12" >阳光:</text>
<text x="114" y="410" fill="#FFFF00" stroke="#FFFF00" stroke-width="0.2" font-size="12" >62.50</text>
<text x="149" y="410" fill="#FF00FF" stroke="#FF00FF" stroke-width="0.2" font-size="12" >空气:</text>
<text x="180" y="410" fill="#FF00FF" stroke="#FF00FF" stroke-width="0.2" font-size="12" >29.88</text>
<text x="215" y="410" fill="#FFFFFF" stroke="#FFFFFF" stroke-width="0.2" font-size="12" >雨露:</text>
<text x="246" y="410" fill="#FFFFFF" stroke="#FFFFFF" stroke-width="0.2" font-size="12" >34.94</text>
<text x="281.5" y="410" fill="#00FFFF" stroke="#00FFFF" stroke-width="0.2" font-size="12" >自然环境:</text>
<text x="336" y="410" fill="#00FFFF" stroke="#00FFFF" stroke-width="0.2" font-size="12" >53.30</text>
<text x="371" y="410" fill="#C8C8C8" stroke="#C8C8C8" stroke-width="0.2" font-size="12" >稻草人:</text>
<text x="414" y="410" fill="#C8C8C8" stroke="#C8C8C8" stroke-width="0.2" font-size="12" >0.00</text>
<text x="442" y="410" fill="#0000FF" stroke="#0000FF" stroke-width="0.2" font-size="12" >麦田:</text>
<text x="472.5" y="410" fill="#0000FF" stroke="#0000FF" stroke-width="0.2" font-size="12" >0.00</text>
<text x="501" y="410" fill="#FFFFFF" stroke="#FFFFFF" stroke-width="0.2" font-size="12" >早熟:</text>
<text x="531.5" y="410" fill="#FFFFFF" stroke="#FFFFFF" stroke-width="0.2" font-size="12" >0.00</text>
<text x="560" y="410" fill="#FFFF00" stroke="#FFFF00" stroke-width="0.2" font-size="12" >光合作用:</text>
<text x="615" y="410" fill="#FFFF00" stroke="#FFFF00" stroke-width="0.2" font-size="12" >0.00</text>
<text x="643.5" y="410" fill="#FF00FF" stroke="#FF00FF" stroke-width="0.2" font-size="12" >乌鸦:</text>
<text x="674" y="410" fill="#FF00FF" stroke="#FF00FF" stroke-width="0.2" font-size="12" >0.00</text>
<text x="702" y="410" fill="#00FF00" stroke="#00FF00" stroke-width="0.2" font-size="12" >暴风雨:</text>
<text x="745" y="410" fill="#00FF00" stroke="#00FF00" stroke-width="0.2" font-size="12" >0.00</text>
<text x="773" y="410" fill="#C8C8C8" stroke="#C8C8C8" stroke-width="0.2" font-size="12" >收割:</text>
<text x="803.5" y="410" fill="#C8C8C8" stroke="#C8C8C8" stroke-width="0.2" font-size="12" >0.00</text>
<text x="261" y="442" fill="#FFFF00" stroke="#FFFF00" stroke-width="0.2" font-size="12" >收割</text>
<text x="5" y="642.5" fill="#FF3232" stroke="#FF3232" stroke-width="0.2" font-size="12" >2025年</text>
<text x="151.2" y="642.5" fill="#FF3232" stroke="#FF3232" stroke-width="0.2" font-size="12" >6</text>
<text x="335.2" y="642.5" fill="#FF3232" stroke="#FF3232" stroke-width="0.2" font-size="12" >7</text>
<text x="546.2" y="642.5" fill="#FF3232" stroke="#FF3232" stroke-width="0.2" font-size="12" >8</text>
<text x="739.2" y="642.5" fill="#FF3232" stroke="#FF3232" stroke-width="0.2" font-size="12" >9</text>
<text x="941.2" y="642.5" fill="#FF3232" stroke="#FF3232" stroke-width="0.2" font-size="12" >10</text>
<rect x="783" y="631" width="77" height="15" fill="#000080" />
<g shape-rendering="crispEdges"><rect x="782" y="630" width="1" height="16" fill="#B00000"/><rect x="860" y="630" width="1" height="16" fill="#B00000"/></g>
<text x="783.5" y="642" fill="#D8D8D8" stroke="#D8D8D8" stroke-width="0.2" font-size="12" >2025/09/08/一</text>
<text x="999" y="627" fill="#FFFFFF"  font-size="20.5" class="serif">乐淘公式网</text>
<text x="1001" y="644" fill="#FFFFFF"  font-size="15" class="serif">www.60lt.com</text>
</svg></body></html>
